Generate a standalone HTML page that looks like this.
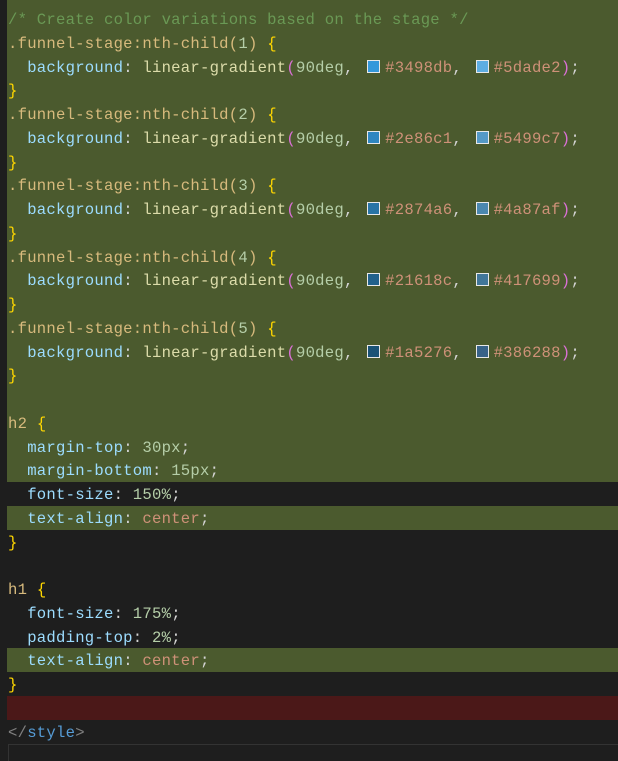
<!DOCTYPE html>
<html><head><meta charset="utf-8"><style>
html,body{margin:0;padding:0;background:#1e1e1e;width:618px;height:760px;overflow:hidden}
.top{position:absolute;left:7px;top:0;width:611px;height:7px;background:#4b5a2e}
.code{position:absolute;left:0;top:7px;width:618px;font-family:"Liberation Mono",monospace;font-size:15.6px;letter-spacing:0.24px;color:#d4d4d4}
.l{height:23.75px;line-height:27px;padding-left:8px;white-space:pre;position:relative;overflow:hidden}
.g{background:#4b5a2e;margin-left:7px;padding-left:1px}
.r{background:#4b1818;margin-left:7px;padding-left:1px}
.c{color:#6a9955}.s{color:#d7ba7d}.p{color:#9cdcfe}.f{color:#dcdcaa}.n{color:#b5cea8}.h{color:#ce9178}.b{color:#ffd700}.pa{color:#da70d6}.t{color:#569cd6}.gr{color:#808080}
.sw{display:inline-block;width:11px;height:11px;border:1px solid #e8e8e8;margin:0 5px 0 4px;vertical-align:-1px}
.box{position:absolute;left:8px;top:744px;width:610px;height:16px;border-top:1px solid #333;border-left:1px solid #333}
</style></head><body>
<div class="top"></div>
<div class="code">
<div class="l g"><span class="c">/* Create color variations based on the stage */</span></div>
<div class="l g"><span class="s">.funnel-stage:nth-child(</span><span class="n">1</span><span class="s">)</span> <span class="b">{</span></div>
<div class="l g">  <span class="p">background</span>: <span class="f">linear-gradient</span><span class="pa">(</span><span class="n">90deg</span>, <span class="sw" style="background:#3498db"></span><span class="h">#3498db</span>, <span class="sw" style="background:#5dade2"></span><span class="h">#5dade2</span><span class="pa">)</span>;</div>
<div class="l g"><span class="b">}</span></div>
<div class="l g"><span class="s">.funnel-stage:nth-child(</span><span class="n">2</span><span class="s">)</span> <span class="b">{</span></div>
<div class="l g">  <span class="p">background</span>: <span class="f">linear-gradient</span><span class="pa">(</span><span class="n">90deg</span>, <span class="sw" style="background:#2e86c1"></span><span class="h">#2e86c1</span>, <span class="sw" style="background:#5499c7"></span><span class="h">#5499c7</span><span class="pa">)</span>;</div>
<div class="l g"><span class="b">}</span></div>
<div class="l g"><span class="s">.funnel-stage:nth-child(</span><span class="n">3</span><span class="s">)</span> <span class="b">{</span></div>
<div class="l g">  <span class="p">background</span>: <span class="f">linear-gradient</span><span class="pa">(</span><span class="n">90deg</span>, <span class="sw" style="background:#2874a6"></span><span class="h">#2874a6</span>, <span class="sw" style="background:#4a87af"></span><span class="h">#4a87af</span><span class="pa">)</span>;</div>
<div class="l g"><span class="b">}</span></div>
<div class="l g"><span class="s">.funnel-stage:nth-child(</span><span class="n">4</span><span class="s">)</span> <span class="b">{</span></div>
<div class="l g">  <span class="p">background</span>: <span class="f">linear-gradient</span><span class="pa">(</span><span class="n">90deg</span>, <span class="sw" style="background:#21618c"></span><span class="h">#21618c</span>, <span class="sw" style="background:#417699"></span><span class="h">#417699</span><span class="pa">)</span>;</div>
<div class="l g"><span class="b">}</span></div>
<div class="l g"><span class="s">.funnel-stage:nth-child(</span><span class="n">5</span><span class="s">)</span> <span class="b">{</span></div>
<div class="l g">  <span class="p">background</span>: <span class="f">linear-gradient</span><span class="pa">(</span><span class="n">90deg</span>, <span class="sw" style="background:#1a5276"></span><span class="h">#1a5276</span>, <span class="sw" style="background:#386288"></span><span class="h">#386288</span><span class="pa">)</span>;</div>
<div class="l g"><span class="b">}</span></div>
<div class="l g"> </div>
<div class="l g"><span class="s">h2</span> <span class="b">{</span></div>
<div class="l g">  <span class="p">margin-top</span>: <span class="n">30px</span>;</div>
<div class="l g">  <span class="p">margin-bottom</span>: <span class="n">15px</span>;</div>
<div class="l">  <span class="p">font-size</span>: <span class="n">150%</span>;</div>
<div class="l g">  <span class="p">text-align</span>: <span class="h">center</span>;</div>
<div class="l"><span class="b">}</span></div>
<div class="l"> </div>
<div class="l"><span class="s">h1</span> <span class="b">{</span></div>
<div class="l">  <span class="p">font-size</span>: <span class="n">175%</span>;</div>
<div class="l">  <span class="p">padding-top</span>: <span class="n">2%</span>;</div>
<div class="l g">  <span class="p">text-align</span>: <span class="h">center</span>;</div>
<div class="l"><span class="b">}</span></div>
<div class="l r"> </div>
<div class="l"><span class="gr">&lt;/</span><span class="t">style</span><span class="gr">&gt;</span></div>
</div>
<div class="box"></div>
</body></html>
